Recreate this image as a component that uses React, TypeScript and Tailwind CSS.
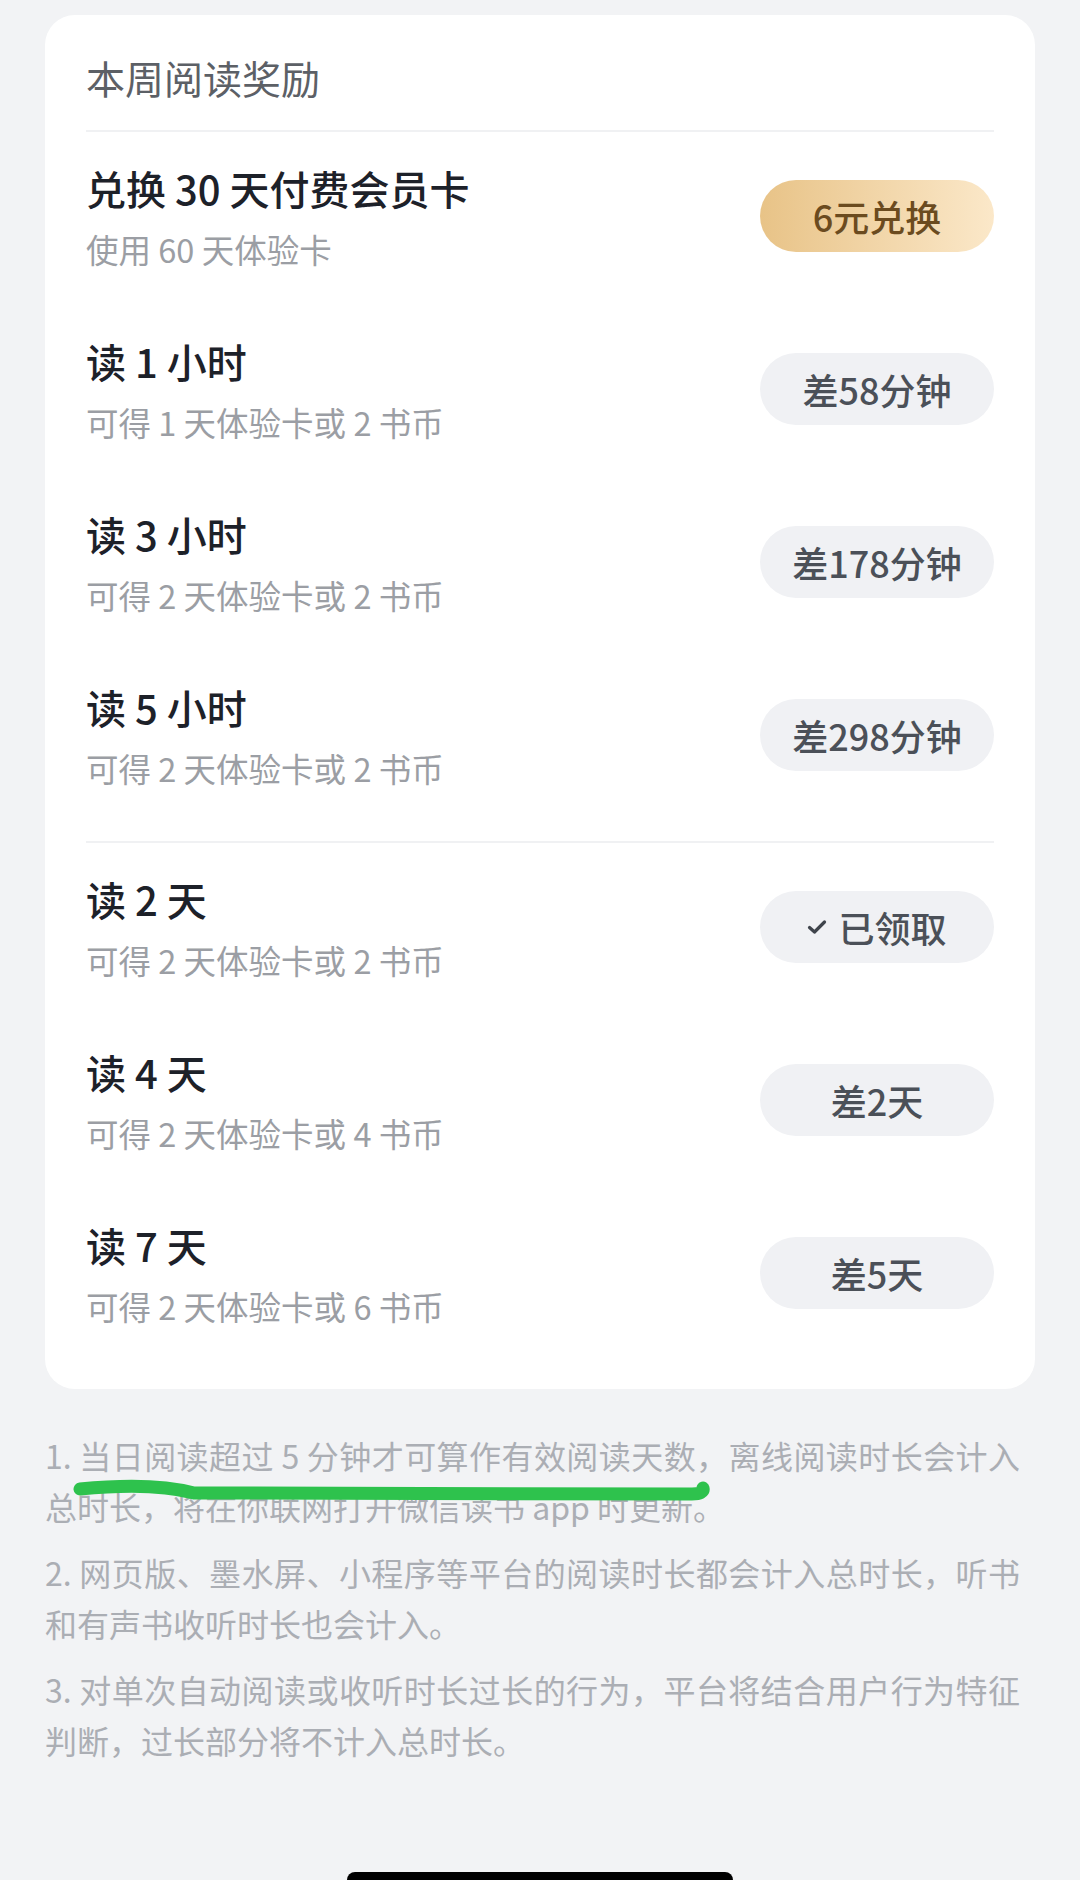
import React from "react";

type Reward = {
  title: string;
  desc: string;
  action: string;
  kind: "gold" | "gray" | "done";
};

const timeRewards: Reward[] = [
  { title: "兑换 30 天付费会员卡", desc: "使用 60 天体验卡", action: "6元兑换", kind: "gold" },
  { title: "读 1 小时", desc: "可得 1 天体验卡或 2 书币", action: "差58分钟", kind: "gray" },
  { title: "读 3 小时", desc: "可得 2 天体验卡或 2 书币", action: "差178分钟", kind: "gray" },
  { title: "读 5 小时", desc: "可得 2 天体验卡或 2 书币", action: "差298分钟", kind: "gray" },
];

const dayRewards: Reward[] = [
  { title: "读 2 天", desc: "可得 2 天体验卡或 2 书币", action: "已领取", kind: "done" },
  { title: "读 4 天", desc: "可得 2 天体验卡或 4 书币", action: "差2天", kind: "gray" },
  { title: "读 7 天", desc: "可得 2 天体验卡或 6 书币", action: "差5天", kind: "gray" },
];

// each note is split into its two visual lines
const notes: [string, string][] = [
  ["1. 当日阅读超过 5 分钟才可算作有效阅读天数，离线阅读时长会计入", "总时长，将在你联网打开微信读书 app 时更新。"],
  ["2. 网页版、墨水屏、小程序等平台的阅读时长都会计入总时长，听书", "和有声书收听时长也会计入。"],
  ["3. 对单次自动阅读或收听时长过长的行为，平台将结合用户行为特征", "判断，过长部分将不计入总时长。"],
];

function CheckMark() {
  return (
    <svg width="20" height="16" viewBox="0 0 20 16" fill="none" className="mr-[11px]">
      <path d="M2.5 8.5 L7.5 13 L17.5 3" stroke="#3f444b" strokeWidth="3.2" strokeLinecap="round" strokeLinejoin="round" />
    </svg>
  );
}

function ActionButton({ reward }: { reward: Reward }) {
  if (reward.kind === "gold") {
    return (
      <div className="flex h-[72px] w-[234px] items-center justify-center rounded-full bg-gradient-to-r from-[#e8c387] to-[#fbe8c9] text-[36px] font-medium text-[#6b4b1f]">
        {reward.action}
      </div>
    );
  }

  return (
    <div className="flex h-[72px] w-[234px] items-center justify-center rounded-full bg-[#f0f1f4] text-[36px] font-medium text-[#4b5058]">
      {reward.kind === "done" && <CheckMark />}
      {reward.action}
    </div>
  );
}

function RewardRow({ reward }: { reward: Reward }) {
  return (
    <div className="flex h-[173px] items-center justify-between pb-[5px]">
      <div className="flex flex-col">
        <div className="text-[40px] font-medium leading-[50px] text-[#1d2129]">{reward.title}</div>
        <div className="mt-[15px] text-[32.5px] leading-[42px] text-[#9b9ea4]">{reward.desc}</div>
      </div>
      <ActionButton reward={reward} />
    </div>
  );
}

export default function App() {
  return (
    <div className="relative h-[1880px] w-full overflow-hidden bg-[#f2f3f5] pt-[15px] font-['Noto_Sans_CJK_SC','Noto_Sans',sans-serif]">
      <div className="mx-[45px] rounded-[30px] bg-white px-[41px] pb-[27px]">
        <div className="pb-[28px] pt-[37px] text-[39px] leading-[50px] text-[#5c6066]">本周阅读奖励</div>
        <div className="h-[2px] bg-[#f0f1f3]" />

        {timeRewards.map((r) => (
          <RewardRow key={r.title} reward={r} />
        ))}

        <div className="mt-[17px] h-[2px] bg-[#f0f1f3]" />

        {dayRewards.map((r) => (
          <RewardRow key={r.title} reward={r} />
        ))}
      </div>

      <div className="ml-[45px] mt-[41px] flex w-[975px] flex-col gap-[15px] text-[32px] leading-[51px] text-[#abaeb4]">
        {notes.map(([first, second]) => (
          <p key={first}>
            <span className="block text-justify [text-align-last:justify]">{first}</span>
            <span className="block">{second}</span>
          </p>
        ))}
      </div>

      {/* hand-drawn highlight over the first note */}
      <svg
        className="pointer-events-none absolute left-[68px] top-[1477px]"
        width="648"
        height="30"
        viewBox="0 0 648 30"
        fill="none"
      >
        <path
          d="M12 12 C 52 8, 96 8, 126 16 L 624 17 C 632 17, 636 15, 635 11"
          stroke="#2ec24d"
          strokeWidth="13"
          strokeLinecap="round"
          strokeLinejoin="round"
        />
      </svg>

      {/* home indicator */}
      <div className="absolute left-[347px] top-[1872px] h-[16px] w-[386px] rounded-full bg-black" />
    </div>
  );
}
